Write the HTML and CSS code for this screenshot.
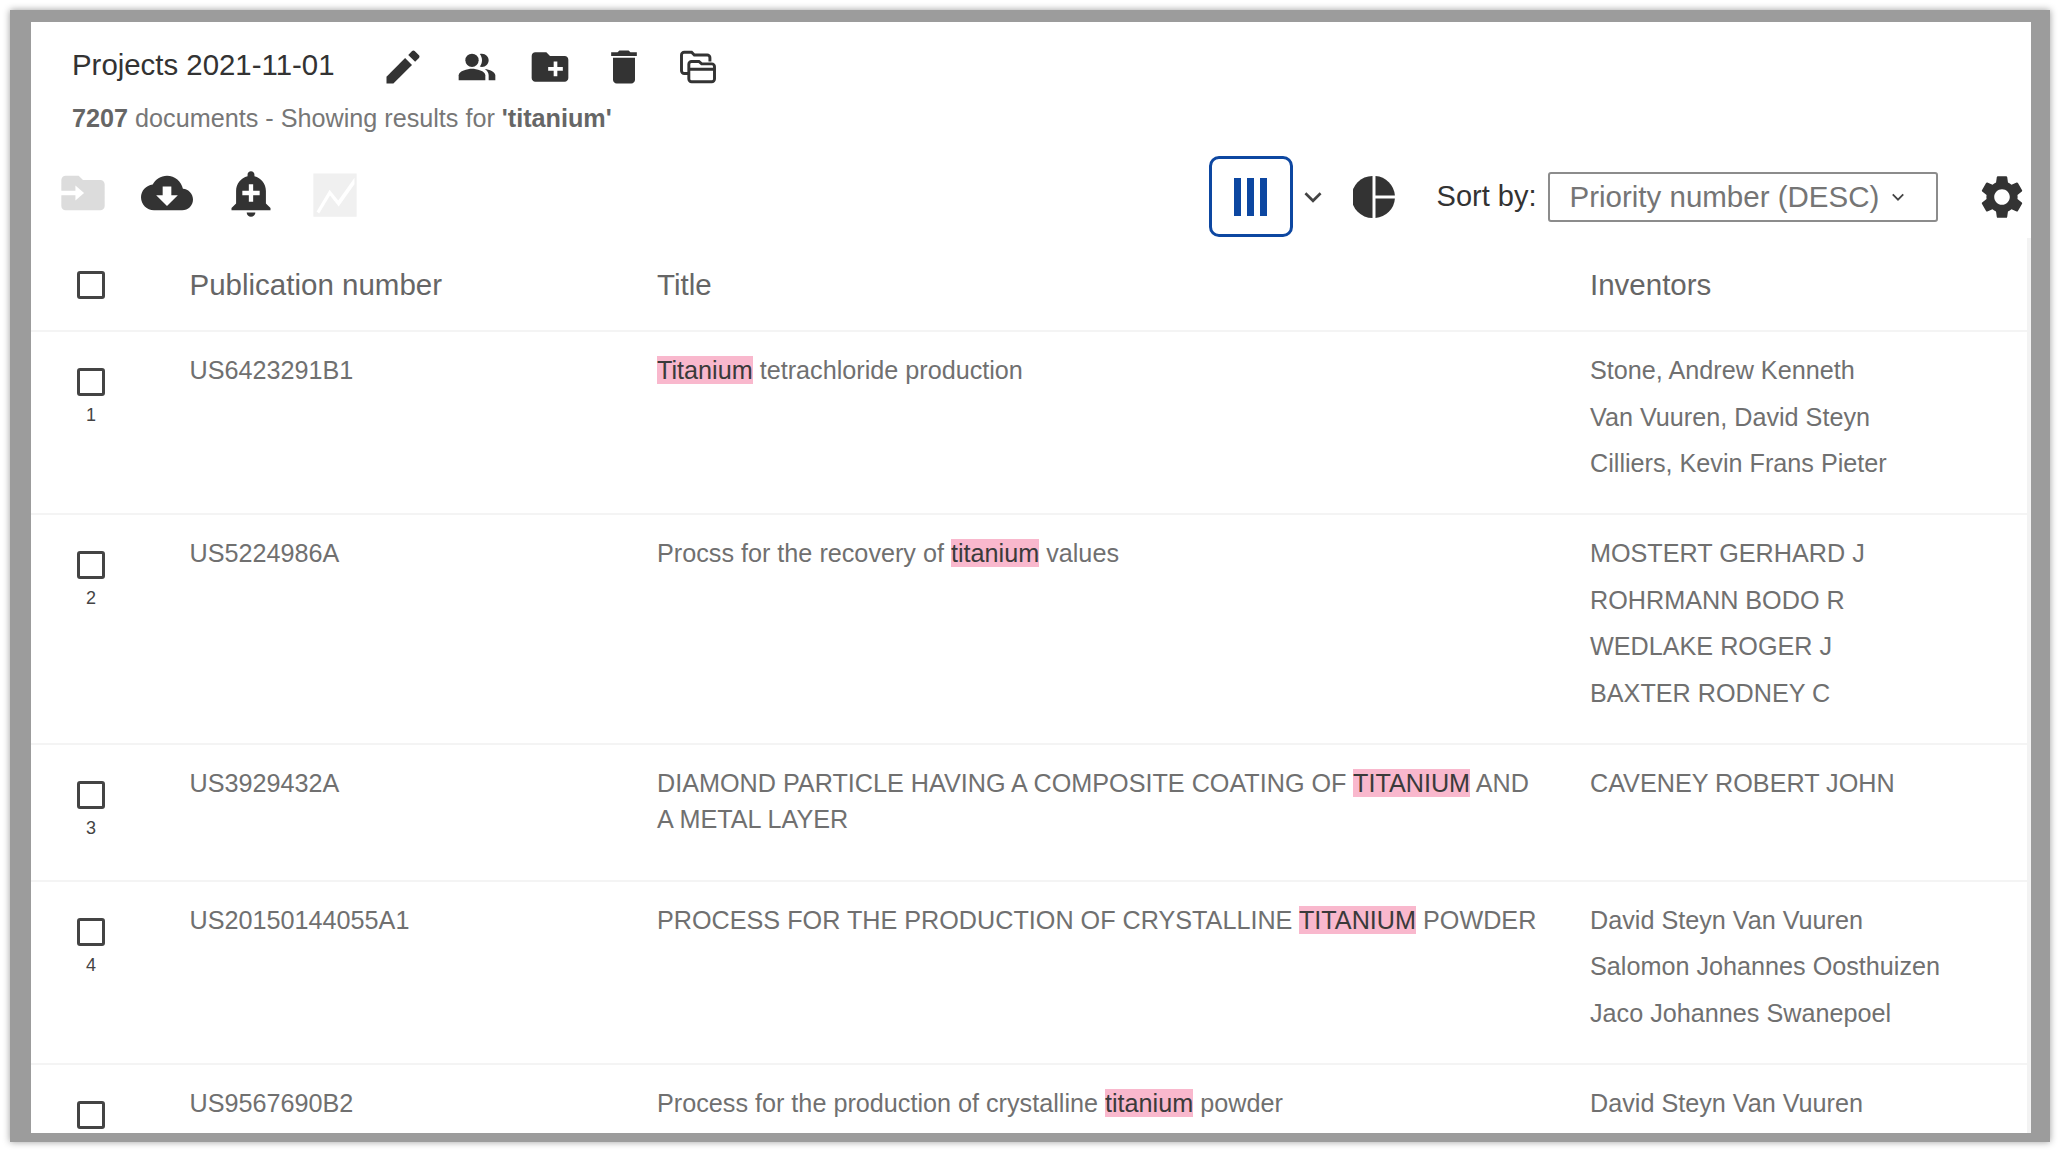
FILE: index.html
```html
<!DOCTYPE html>
<html lang="en">
<head>
<meta charset="utf-8">
<title>Projects 2021-11-01</title>
<link rel="stylesheet" href="styles.css">
</head>
<body>
<div class="frame">
  <main class="panel">
    <div class="scroll-track"></div>
    <header class="head">
      <div class="title-row">
        <h1 class="title">Projects 2021-11-01</h1>
        <div class="title-icons">
          <svg class="icon-s" viewBox="0 0 24 24"><path d="M3 17.25V21h3.75L16.9 10.85l-3.75-3.75z"/><path d="M20.71 7.04c.39-.39.39-1.02 0-1.41l-2.34-2.34c-.39-.39-1.02-.39-1.41 0l-2.1 2.1 3.75 3.75 2.1-2.1z"/></svg>
          <svg class="icon-s icon-group" viewBox="0 0 24 24"><path d="M16.67 13.13C18.04 14.06 19 15.32 19 17v3h4v-3c0-2.18-3.57-3.47-6.33-3.87z"/><circle cx="9" cy="8" r="4"/><path d="M15 12c2.21 0 4-1.79 4-4s-1.79-4-4-4c-.47 0-.91.1-1.33.24C14.5 5.27 15 6.58 15 8s-.5 2.73-1.33 3.76c.42.14.86.24 1.33.24z"/><path d="M9 13c-2.67 0-8 1.34-8 4v3h16v-3c0-2.66-5.33-4-8-4z"/></svg>
          <svg class="icon-s" viewBox="0 0 24 24"><path d="M20 6h-8l-2-2H4c-1.11 0-1.99.89-1.99 2L2 18c0 1.11.89 2 2 2h16c1.11 0 2-.89 2-2V8c0-1.11-.89-2-2-2zm-1 8h-3v3h-2v-3h-3v-2h3V9h2v3h3v2z"/></svg>
          <svg class="icon-s" viewBox="0 0 24 24"><path d="M6 19c0 1.1.9 2 2 2h8c1.1 0 2-.9 2-2V7H6v12zM19 4h-3.5l-1-1h-5l-1 1H5v2h14V4z"/></svg>
          <svg class="icon-s icon-copy" viewBox="0 0 24 24"><path class="outline" d="M7 15.5H4.5a1.5 1.5 0 0 1-1.5-1.5V5.500A1.500 1.500 0 0 1 4.500 4h4l1.500 1.500h7A1.500 1.500 0 0 1 18.500 7v2"/><path class="outline" d="M8.500 9h4l1.500 1.300h5.500A1.500 1.500 0 0 1 21 11.800v6.700a1.500 1.500 0 0 1-1.500 1.500H8.500A1.500 1.500 0 0 1 7 18.500v-8A1.500 1.500 0 0 1 8.500 9zM7 13.200h14"/></svg>
        </div>
      </div>
      <p class="summary"><b>7207</b> documents - Showing results for <b>'titanium'</b></p>
    </header>

    <div class="toolbar">
      <div class="tools-left">
        <svg class="icon-l off" viewBox="0 0 24 24"><path d="M20 6h-8l-2-2H4c-1.100 0-2 .9-2 2v5h6.500V8.500l4 3.500-4 3.500V13H2v5c0 1.100.9 2 2 2h16c1.100 0 2-.9 2-2V8c0-1.100-.9-2-2-2z"/></svg>
        <svg class="icon-l" viewBox="0 0 24 24"><path d="M19.350 10.040C18.670 6.590 15.640 4 12 4 9.110 4 6.640 5.640 5.400 8.040 2.350 8.360 0 10.950 0 14c0 3.310 2.690 6 6 6h13c2.760 0 5-2.240 5-5 0-2.640-2.050-4.780-4.650-4.960zM17 13l-5 5-5-5h3V9h4v4h3z"/></svg>
        <svg class="icon-l" viewBox="0 0 24 24"><path d="M10.010 21.010c0 1.100.890 1.990 1.990 1.990s1.990-.890 1.990-1.990h-3.980zm8.870-4.190V11c0-3.250-2.250-5.970-5.290-6.690v-.720C13.590 2.710 12.880 2 12 2s-1.590.710-1.590 1.590v.720C7.370 5.030 5.120 7.750 5.120 11v5.820L3 18.940V20h18v-1.060l-2.120-2.120zM16 13.010h-3v3h-2v-3H8V11h3V8h2v3h3v2.010z"/></svg>
        <svg class="icon-l off-light" viewBox="0 0 24 24"><path fill-rule="evenodd" d="M2 3h20v20H2zM3.500 20.500l6-10 4 5L21 5v3l-7.300 10.200-4-5-5 8.300z"/></svg>
      </div>
      <div class="tools-right">
        <button class="view-btn" type="button" aria-label="Columns"><span class="bar"></span><span class="bar"></span><span class="bar"></span></button>
        <svg class="chev" viewBox="0 0 24 24"><path d="M5 8.500l7 7 7-7"/></svg>
        <svg class="pie" viewBox="0 0 42 42"><path d="M19.500 0v42a21 21 0 0 1 0-42z"/><path d="M22.500 0a21 21 0 0 1 19.400 19.500H22.500z"/><path d="M22.500 22.500h19.400A21 21 0 0 1 22.500 42z"/></svg>
        <span class="sort-label">Sort by:</span>
        <div class="select">
          <span>Priority number (DESC)</span>
          <svg class="chev-s" viewBox="0 0 24 24"><path d="M5 8.500l7 7 7-7"/></svg>
        </div>
        <svg class="gear" viewBox="0 0 24 24"><path d="M19.140 12.940c.040-.300.060-.610.060-.940 0-.320-.020-.640-.070-.940l2.030-1.580c.180-.140.230-.410.120-.610l-1.920-3.320c-.120-.220-.370-.290-.590-.220l-2.390.960c-.500-.380-1.030-.700-1.620-.940l-.360-2.540c-.040-.240-.240-.410-.480-.410h-3.840c-.240 0-.430.170-.470.410l-.360 2.540c-.590.240-1.130.570-1.620.940l-2.390-.960c-.220-.080-.470 0-.590.220L2.740 8.870c-.120.210-.080.470.120.610l2.030 1.580c-.050.300-.090.630-.090.940s.020.640.070.940l-2.030 1.580c-.180.140-.230.410-.120.610l1.920 3.320c.120.220.370.290.590.220l2.390-.960c.500.380 1.030.700 1.620.940l.360 2.540c.050.240.240.410.480.410h3.840c.240 0 .440-.170.470-.410l.360-2.540c.590-.240 1.130-.560 1.620-.940l2.390.960c.220.080.470 0 .590-.220l1.920-3.320c.120-.220.070-.470-.120-.610l-2.010-1.580zM12 15.600c-1.980 0-3.600-1.620-3.600-3.600s1.620-3.600 3.600-3.600 3.600 1.620 3.600 3.600-1.620 3.600-3.600 3.600z"/></svg>
      </div>
    </div>

    <section class="table">
      <div class="row row-head">
        <div class="cell-check"><span class="check"></span></div>
        <div>Publication number</div>
        <div>Title</div>
        <div>Inventors</div>
      </div>

      <div class="row">
        <div class="cell-check"><span class="check"></span><span class="num">1</span></div>
        <div class="pub">US6423291B1</div>
        <div class="doc-title"><mark>Titanium</mark> tetrachloride production</div>
        <div class="inventors"><div>Stone, Andrew Kenneth</div><div>Van Vuuren, David Steyn</div><div>Cilliers, Kevin Frans Pieter</div></div>
      </div>

      <div class="row">
        <div class="cell-check"><span class="check"></span><span class="num">2</span></div>
        <div class="pub">US5224986A</div>
        <div class="doc-title">Procss for the recovery of <mark>titanium</mark> values</div>
        <div class="inventors"><div>MOSTERT GERHARD J</div><div>ROHRMANN BODO R</div><div>WEDLAKE ROGER J</div><div>BAXTER RODNEY C</div></div>
      </div>

      <div class="row">
        <div class="cell-check"><span class="check"></span><span class="num">3</span></div>
        <div class="pub">US3929432A</div>
        <div class="doc-title">DIAMOND PARTICLE HAVING A COMPOSITE COATING OF <mark>TITANIUM</mark> AND A METAL LAYER</div>
        <div class="inventors"><div>CAVENEY ROBERT JOHN</div></div>
      </div>

      <div class="row">
        <div class="cell-check"><span class="check"></span><span class="num">4</span></div>
        <div class="pub">US20150144055A1</div>
        <div class="doc-title">PROCESS FOR THE PRODUCTION OF CRYSTALLINE <mark>TITANIUM</mark> POWDER</div>
        <div class="inventors"><div>David Steyn Van Vuuren</div><div>Salomon Johannes Oosthuizen</div><div>Jaco Johannes Swanepoel</div></div>
      </div>

      <div class="row">
        <div class="cell-check"><span class="check"></span></div>
        <div class="pub">US9567690B2</div>
        <div class="doc-title">Process for the production of crystalline <mark>titanium</mark> powder</div>
        <div class="inventors"><div>David Steyn Van Vuuren</div></div>
      </div>
    </section>
  </main>
</div>
</body>
</html>
```

FILE: styles.css
```css
* { box-sizing: border-box; }
html, body { margin: 0; height: 100%; background: #fff; }
body {
  padding: 10px 12px 13px 10px;
  overflow: hidden;
  font-family: "Liberation Sans", Arial, sans-serif;
  color: #333;
}
.frame {
  height: 100%;
  border-style: solid;
  border-color: #9c9c9c;
  border-width: 12px 19px 9px 21px;
  box-shadow: 0 0 7px 0 #9c9c9c;
}
.panel {
  position: relative;
  height: 100%;
  overflow: hidden;
  background: #fff;
}
.scroll-track {
  position: absolute;
  top: 216px;
  right: 0;
  bottom: 0;
  width: 4px;
  background: #f3f3f3;
}
svg { display: block; fill: #333; }
.head { padding: 21px 0 0 41px; }
.title-row { display: flex; align-items: center; height: 44px; }
.title { margin: 0; font-size: 29.400px; font-weight: 400; color: #333; width: 309px; white-space: nowrap; }
.title-icons { display: flex; gap: 29.500px; position: relative; top: 2px; }
.icon-s { width: 44px; height: 44px; }
.icon-group { width: 40px; height: 40px; margin: 2px; }
.icon-copy { margin-left: 1px; }
.outline { fill: none; stroke: #333; stroke-width: 1.600; }
.summary { margin: 17px 0 0; font-size: 25.200px; line-height: 29px; color: #777; white-space: nowrap; }
.summary b { color: #666; }
.toolbar {
  display: flex;
  justify-content: space-between;
  align-items: center;
  height: 81px;
  margin-top: 23px;
  padding: 0 3.500px 0 25.500px;
}
.tools-left { display: flex; gap: 32px; margin-bottom: 7px; }
.icon-l { width: 52px; height: 52px; }
.off { fill: #dcdcdc; }
.off-light { fill: #f0f0f0; }
.tools-right { display: flex; align-items: center; }
.view-btn {
  display: flex;
  justify-content: center;
  align-items: center;
  gap: 6px;
  width: 84px;
  height: 81px;
  padding: 0;
  background: #fff;
  border: 3px solid #0d47a1;
  border-radius: 10px;
}
.bar { width: 7px; height: 38px; background: #0d47a1; }
.chev { width: 26px; height: 26px; margin-left: 7px; }
.chev path, .chev-s path { fill: none; stroke: #444; stroke-width: 2.400; }
.pie { width: 42px; height: 42px; margin-left: 27px; }
.sort-label { margin-left: 42px; font-size: 29px; color: #333; white-space: nowrap; }
.select {
  display: flex;
  align-items: center;
  width: 390px;
  height: 50px;
  margin-left: 11px;
  padding-left: 20px;
  border: 2px solid #8c8c8c;
  border-radius: 3px;
  font-size: 29.500px;
  color: #757575;
  white-space: nowrap;
}
.chev-s { width: 18px; height: 18px; margin-left: 10px; }
.gear { width: 52px; height: 52px; margin-left: 38px; }
.table { margin-right: 4px; }
.row {
  display: grid;
  grid-template-columns: 158.500px 467.500px 933px 1fr;
  border-bottom: 2px solid #f4f4f4;
  font-size: 25.200px;
  color: #707070;
}
.row-head {
  height: 95px;
  align-items: center;
  font-size: 29.500px;
  color: #666;
  padding-top: 2px;
}
.cell-check {
  display: flex;
  flex-direction: column;
  align-items: center;
  min-height: 134.600px;
  padding: 36px 84.500px 0 46px;
}
.row-head .cell-check { min-height: 0; padding-top: 0; padding-bottom: 0; }
.check {
  flex: none;
  width: 28px;
  height: 28px;
  border: 3px solid #444;
  border-radius: 3px;
}
.num { margin-top: 8px; font-size: 18px; line-height: 22px; color: #444; }
.pub, .doc-title { padding-top: 21px; line-height: 35.500px; }
.doc-title { padding-right: 45px; }
.inventors { padding: 15px 0 26.500px; line-height: 46.600px; white-space: nowrap; }
mark { background: #f9b8cd; color: #3a3a3a; }
```
